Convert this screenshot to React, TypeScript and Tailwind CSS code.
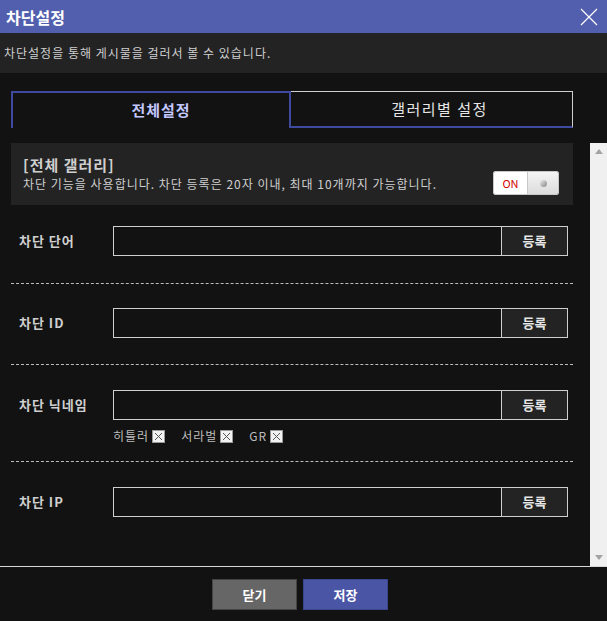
const font = { fontFamily: '"Noto Sans CJK KR", "Noto Sans", sans-serif' };

function InputRow({ label }: { label: string }) {
  return (
    <div className="flex h-[30px] items-center">
      <div className="w-[102px] pl-[8px] text-[13px] font-bold tracking-[1px] text-[#cfcfcf]">{label}</div>
      <div className="flex h-[30px] w-[455px] border border-[#cfcfcf] bg-[#121212]">
        <div className="flex-1" />
        <button className="w-[66px] border-l border-[#cfcfcf] bg-[#232323] text-[13px] font-bold text-[#e6e6e6]">
          등록
        </button>
      </div>
    </div>
  );
}

function Dashed() {
  return <div className="ml-[11px] w-[562px] border-t border-dashed border-[#bdbdbd]" />;
}

function Tag({ name }: { name: string }) {
  return (
    <span className="flex items-center gap-[3px] text-[12px] tracking-[1px] text-[#bdbdbd]">
      {name}
      <span className="flex h-[13px] w-[13px] items-center justify-center border border-[#999] bg-[#f2f2f2]">
        <svg width="9" height="9" viewBox="0 0 9 9">
          <path d="M1 1L8 8M8 1L1 8" stroke="#555" strokeWidth="1" />
        </svg>
      </span>
    </span>
  );
}

export default function App() {
  return (
    <div style={font} className="flex h-[621px] w-[607px] flex-col overflow-hidden bg-[#121212]">
      {/* header */}
      <div className="flex h-[33px] shrink-0 items-center justify-between bg-[#525eae] pl-[6px] pr-[9px]">
        <div className="text-[16px] font-bold text-white">차단설정</div>
        <svg width="18" height="18" viewBox="0 0 18 18">
          <path d="M1 1L17 17M17 1L1 17" stroke="#fff" strokeWidth="1.2" />
        </svg>
      </div>
      <div className="flex h-[40px] shrink-0 items-center bg-[#232323] pl-[4px] text-[12px] tracking-[1px] text-[#cfcfcf]">
        차단설정을 통해 게시물을 걸러서 볼 수 있습니다.
      </div>

      {/* tabs */}
      <div className="h-[70px] shrink-0 px-[11px] pt-[18px]">
        <div className="flex h-[37px] w-[562px]">
          <div className="flex w-[280px] items-center justify-center border-x-2 border-t-2 border-[#3e4aa0] pl-[20px] text-[15px] font-bold tracking-[1px] text-[#c3c8ff]">
            전체설정
          </div>
          <div className="flex flex-1 items-center justify-center border-b-2 border-r border-t border-[#3e4aa0] border-r-[#cfcfcf] border-t-[#cfcfcf] pl-[16px] text-[15px] tracking-[1.5px] text-[#e6e6e6]">
            갤러리별 설정
          </div>
        </div>
      </div>

      {/* scroll area */}
      <div className="flex h-[423px] shrink-0">
        <div className="w-[590px]">
          <div className="ml-[11px] flex h-[62px] w-[562px] items-center justify-between bg-[#232323] pl-[12px] pr-[14px]">
            <div>
              <div className="text-[15px] font-bold leading-[20px] tracking-[1px] text-[#cfcfcf]">[전체 갤러리]</div>
              <div className="text-[12px] leading-[18px] tracking-[1px] text-[#cfcfcf]">
                차단 기능을 사용합니다. 차단 등록은 20자 이내, 최대 10개까지 가능합니다.
              </div>
            </div>
            <div className="mt-[18px] flex h-[24px] w-[66px] overflow-hidden rounded-[2px] border border-[#c8c8c8]">
              <div className="flex w-[33px] items-center justify-center bg-white text-[11px] text-[#d40000]">ON</div>
              <div className="flex flex-1 items-center justify-center border-l border-[#c8c8c8] bg-gradient-to-b from-[#f4f4f4] to-[#dcdcdc]">
                <span className="h-[7px] w-[7px] rounded-full bg-gradient-to-br from-[#eee] to-[#888]" />
              </div>
            </div>
          </div>

          <div className="pt-[21px]">
            <div className="px-[11px]">
              <InputRow label="차단 단어" />
            </div>
            <div className="h-[27px]" />
            <Dashed />
            <div className="h-[24px]" />
            <div className="px-[11px]">
              <InputRow label="차단 ID" />
            </div>
            <div className="h-[26px]" />
            <Dashed />
            <div className="h-[25px]" />
            <div className="px-[11px]">
              <InputRow label="차단 닉네임" />
            </div>
            <div className="flex h-[30px] items-center gap-[16px] pl-[113px] pt-[2px]">
              <Tag name="히틀러" />
              <Tag name="서라벌" />
              <Tag name="GR" />
            </div>
            <div className="h-[11px]" />
            <Dashed />
            <div className="h-[25px]" />
            <div className="px-[11px]">
              <InputRow label="차단 IP" />
            </div>
          </div>
        </div>
        <div className="flex w-[17px] flex-col items-center justify-between bg-[#f0f0f0] py-[6px]">
          <svg width="8" height="5" viewBox="0 0 8 5">
            <path d="M4 0L8 5H0Z" fill="#a3a3a3" />
          </svg>
          <svg width="8" height="5" viewBox="0 0 8 5">
            <path d="M0 0H8L4 5Z" fill="#a3a3a3" />
          </svg>
        </div>
      </div>

      {/* footer */}
      <div className="h-px shrink-0 bg-[#d8d8d8]" />
      <div className="flex flex-1 gap-[6px] pl-[212px] pt-[12px]">
        <button className="h-[31px] w-[85px] border border-[#444] bg-[#666] text-[13px] font-bold text-white">
          닫기
        </button>
        <button className="h-[31px] w-[85px] border border-[#3c468f] bg-[#4a55a6] text-[13px] font-bold text-white">
          저장
        </button>
      </div>
    </div>
  );
}
